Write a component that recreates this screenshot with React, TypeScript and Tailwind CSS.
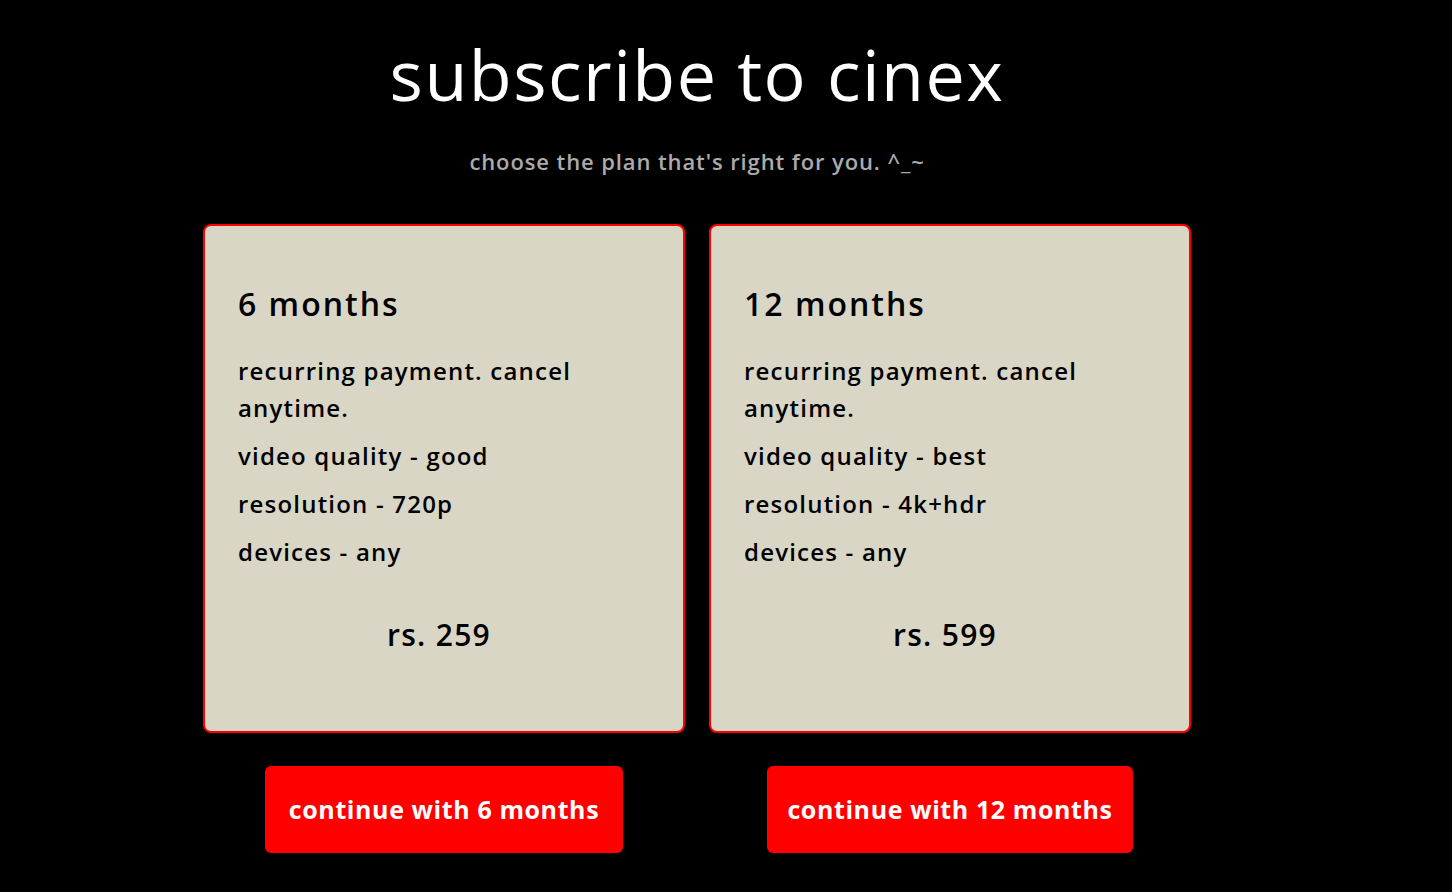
import React from "react";

const font = { fontFamily: '"Open Sans", "Noto Sans", sans-serif' };

type Plan = {
  title: string;
  quality: string;
  res: string;
  price: string;
  cta: string;
  btnW: string;
};

const plans: Plan[] = [
  { title: "6 months", quality: "good", res: "720p", price: "rs. 259", cta: "continue with 6 months", btnW: "w-[358px]" },
  { title: "12 months", quality: "best", res: "4k+hdr", price: "rs. 599", cta: "continue with 12 months", btnW: "w-[366px]" },
];

export default function App() {
  return (
    <div className="min-h-screen w-full bg-black" style={font}>
      <div className="flex w-[1394px] flex-col items-center">
        <h1 className="mt-[34px] text-[70px] leading-[80px] font-normal tracking-[1.5px] text-white">
          subscribe to cinex
        </h1>
        <p className="mt-[33px] text-[22px] leading-[28px] font-semibold tracking-[0.9px] text-[#ababab]">
          choose the plan that's right for you. ^_~
        </p>
        <div className="mt-[49px] flex gap-6">
          {plans.map((p) => (
            <div key={p.title} className="flex w-[482px] flex-col items-center gap-[33px]">
              <div className="h-[509px] w-[482px] rounded-lg border-2 border-[#ff0000] bg-[#d9d6c6] px-[33px] pt-[58px] text-black">
                <h2 className="text-[32px] leading-[40px] font-semibold tracking-[2px]">{p.title}</h2>
                <div className="mt-[28px] flex flex-col gap-[11px] text-[24px] leading-[37px] font-semibold tracking-[1.2px]">
                  <p>
                    recurring payment. cancel
                    <br />
                    anytime.
                  </p>
                  <p>video quality - {p.quality}</p>
                  <p>resolution - {p.res}</p>
                  <p>devices - any</p>
                </div>
                <p className="mt-[45px] pr-[10px] text-center text-[30px] leading-[40px] font-semibold tracking-[1.3px]">
                  {p.price}
                </p>
              </div>
              <button
                className={`${p.btnW} h-[87px] rounded-md bg-[#ff0000] text-[25px] font-bold tracking-[0.6px] text-white`}
              >
                {p.cta}
              </button>
            </div>
          ))}
        </div>
      </div>
    </div>
  );
}
